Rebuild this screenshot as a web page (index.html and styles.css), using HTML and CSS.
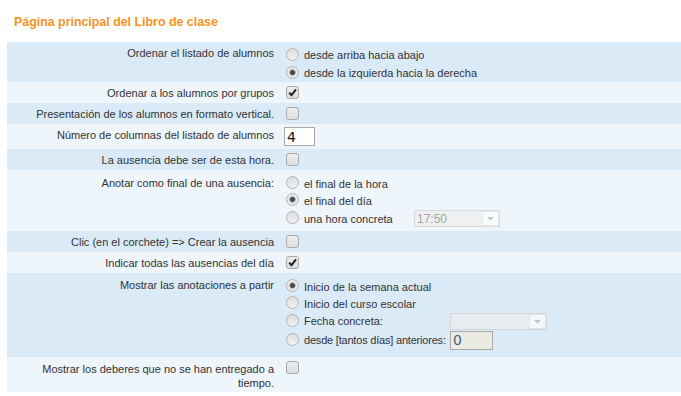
FILE: index.html
```html
<!DOCTYPE html>
<html lang="es">

<head>
    <meta charset="UTF-8">
    <meta name="viewport" content="width=device-width, initial-scale=1.0">
    <title>Libro de clase</title>
    <link rel="stylesheet" href="styles.css">
</head>

<body>
    <h1 class="title">Página principal del Libro de clase</h1>
    <table class="settings">
        <tr class="dark">
            <td class="lbl">Ordenar el listado de alumnos</td>
            <td class="ctl list list-tall">
                <label class="opt"><input type="radio" name="orden">desde arriba hacia abajo</label>
                <label class="opt"><input type="radio" name="orden" checked>desde la izquierda hacia la derecha</label>
            </td>
        </tr>
        <tr class="light">
            <td class="lbl">Ordenar a los alumnos por grupos</td>
            <td class="ctl"><input type="checkbox" checked></td>
        </tr>
        <tr class="dark">
            <td class="lbl">Presentación de los alumnos en formato vertical.</td>
            <td class="ctl"><input type="checkbox"></td>
        </tr>
        <tr class="light">
            <td class="lbl">Número de columnas del listado de alumnos</td>
            <td class="ctl"><input type="text" class="num" value="4"></td>
        </tr>
        <tr class="dark">
            <td class="lbl">La ausencia debe ser de esta hora.</td>
            <td class="ctl"><input type="checkbox"></td>
        </tr>
        <tr class="light">
            <td class="lbl lbl-multi">Anotar como final de una ausencia:</td>
            <td class="ctl list">
                <label class="opt"><input type="radio" name="final">el final de la hora</label>
                <label class="opt"><input type="radio" name="final" checked>el final del día</label>
                <div class="opt opt-sel">
                    <input type="radio" name="final"><span class="opt-text hora">una hora concreta</span>
                    <select class="sel sel-hora" disabled><option>17:50</option></select>
                </div>
            </td>
        </tr>
        <tr class="dark">
            <td class="lbl">Clic (en el corchete) =&gt; Crear la ausencia</td>
            <td class="ctl"><input type="checkbox"></td>
        </tr>
        <tr class="light">
            <td class="lbl">Indicar todas las ausencias del día</td>
            <td class="ctl"><input type="checkbox" checked></td>
        </tr>
        <tr class="dark">
            <td class="lbl lbl-multi2">Mostrar las anotaciones a partir</td>
            <td class="ctl list list-last">
                <label class="opt"><input type="radio" name="desde" checked>Inicio de la semana actual</label>
                <label class="opt"><input type="radio" name="desde">Inicio del curso escolar</label>
                <div class="opt opt-sel2">
                    <input type="radio" name="desde"><span class="opt-text fecha">Fecha concreta:</span>
                    <select class="sel sel-fecha" disabled><option></option></select>
                </div>
                <div class="opt opt-inp">
                    <input type="radio" name="desde"><span class="opt-text fecha tight">desde [tantos días] anteriores:</span>
                    <input type="text" class="dias" value="0" disabled>
                </div>
            </td>
        </tr>
        <tr class="light">
            <td class="lbl lbl-multi2 lbl-end">Mostrar los deberes que no se han entregado a tiempo.</td>
            <td class="ctl ctl-top"><input type="checkbox"></td>
        </tr>
    </table>
</body>

</html>
```

FILE: styles.css
```css
* {
    box-sizing: border-box;
}

body {
    margin: 0;
    font-family: "Liberation Sans", Arial, sans-serif;
    font-size: 11px;
    color: #333;
}

.title {
    margin: 0;
    padding: 14px 0 0 14px;
    font-size: 12.4px;
    line-height: 16px;
    font-weight: bold;
    color: #f6921e;
}

.settings {
    margin: 12px 0 0 7px;
    width: calc(100% - 7px);
    border-collapse: collapse;
    border-spacing: 0;
    table-layout: fixed;
}

.dark {
    background-color: #daeaf7;
}

.light {
    background-color: #eef5fb;
}

td {
    padding: 0;
    vertical-align: top;
    line-height: 14px;
}

.lbl {
    width: 273px;
    padding: 4px 6px 3px 6px;
    text-align: right;
}

.lbl-multi {
    padding-top: 6px;
}

.lbl-multi2 {
    padding-top: 5px;
}

.lbl-end {
    padding-bottom: 2px;
}

.ctl {
    padding-left: 6px;
}

.ctl-top input {
    margin-top: 5px;
}

/* radio lists */
.list {
    padding-top: 5px;
    padding-bottom: 3px;
}

.list-tall {
    padding-top: 4px;
    padding-bottom: 0;
}

.list-last {
    padding-bottom: 7px;
}

.opt {
    display: flex;
    align-items: center;
    height: 17px;
    white-space: nowrap;
}

.list-tall .opt {
    height: 18px;
}

.opt-sel {
    height: 19px;
}

.opt-sel2 {
    height: 18px;
}

.opt-inp {
    height: 20px;
}

.opt-text {
    display: inline-block;
}

.hora {
    width: 110px;
}

.fecha {
    width: 146px;
}

.tight {
    letter-spacing: -0.2px;
}

/* form controls */
input[type="radio"],
input[type="checkbox"] {
    appearance: none;
    -webkit-appearance: none;
    width: 13px;
    height: 13px;
    margin: 0;
    border: 1px solid #b3b3b3;
    background: linear-gradient(#dcdcdc, #f3f3f3);
    flex: none;
}

input[type="radio"] {
    border-radius: 50%;
    margin: 0 5px 2px 0;
}

input[type="radio"]:checked {
    background: radial-gradient(circle, #4a4a4a 0, #4a4a4a 2px, #8a8a8a 2.6px, #e4e4e4 3.4px, #f3f3f3 100%);
}

input[type="checkbox"] {
    display: block;
    border-radius: 3px;
    margin: 4px 0;
    border-color: #a9a9a9;
    background: linear-gradient(#ededed, #dedede);
}

input[type="checkbox"]:checked {
    background: url("data:image/svg+xml,%3Csvg xmlns='http://www.w3.org/2000/svg' viewBox='0 0 11 11'%3E%3Cpath d='M2.2 5.6l2.3 2.5L9 2.4' fill='none' stroke='%23222' stroke-width='2'/%3E%3C/svg%3E") center / 11px 11px no-repeat, linear-gradient(#ededed, #dedede);
}

.num {
    display: block;
    width: 31px;
    height: 19px;
    margin: 3px 0 3px -2px;
    padding: 0 2px;
    border: 1px solid #a9a9a9;
    background: #fff;
    font-family: "DejaVu Sans", sans-serif;
    font-size: 14px;
    color: #111;
}

.sel {
    appearance: none;
    -webkit-appearance: none;
    height: 17px;
    margin: 0;
    padding: 0 0 0 2px;
    border: 1px solid #cfcfcf;
    border-radius: 0;
    font-family: "Liberation Sans", Arial, sans-serif;
    font-size: 12px;
    color: #808080;
    background: #eee url("data:image/svg+xml,%3Csvg xmlns='http://www.w3.org/2000/svg' viewBox='0 0 17 15'%3E%3Crect x='0.5' y='0.5' width='16' height='14' fill='%23fff' stroke='%23e4e4e4'/%3E%3Cpath d='M5 6h7l-3.5 3.5z' fill='%23b5b5b5'/%3E%3C/svg%3E") right 0 top 0 / 17px 15px no-repeat;
}

.sel-hora {
    width: 86px;
}

.sel-fecha {
    width: 97px;
}

.dias {
    width: 43px;
    height: 19px;
    margin: 0;
    padding: 0 2px;
    border: 1px solid #a9a9a9;
    background: #ebebe4;
    font-family: "DejaVu Sans", sans-serif;
    font-size: 14px;
    color: #4b5a78;
}
```
